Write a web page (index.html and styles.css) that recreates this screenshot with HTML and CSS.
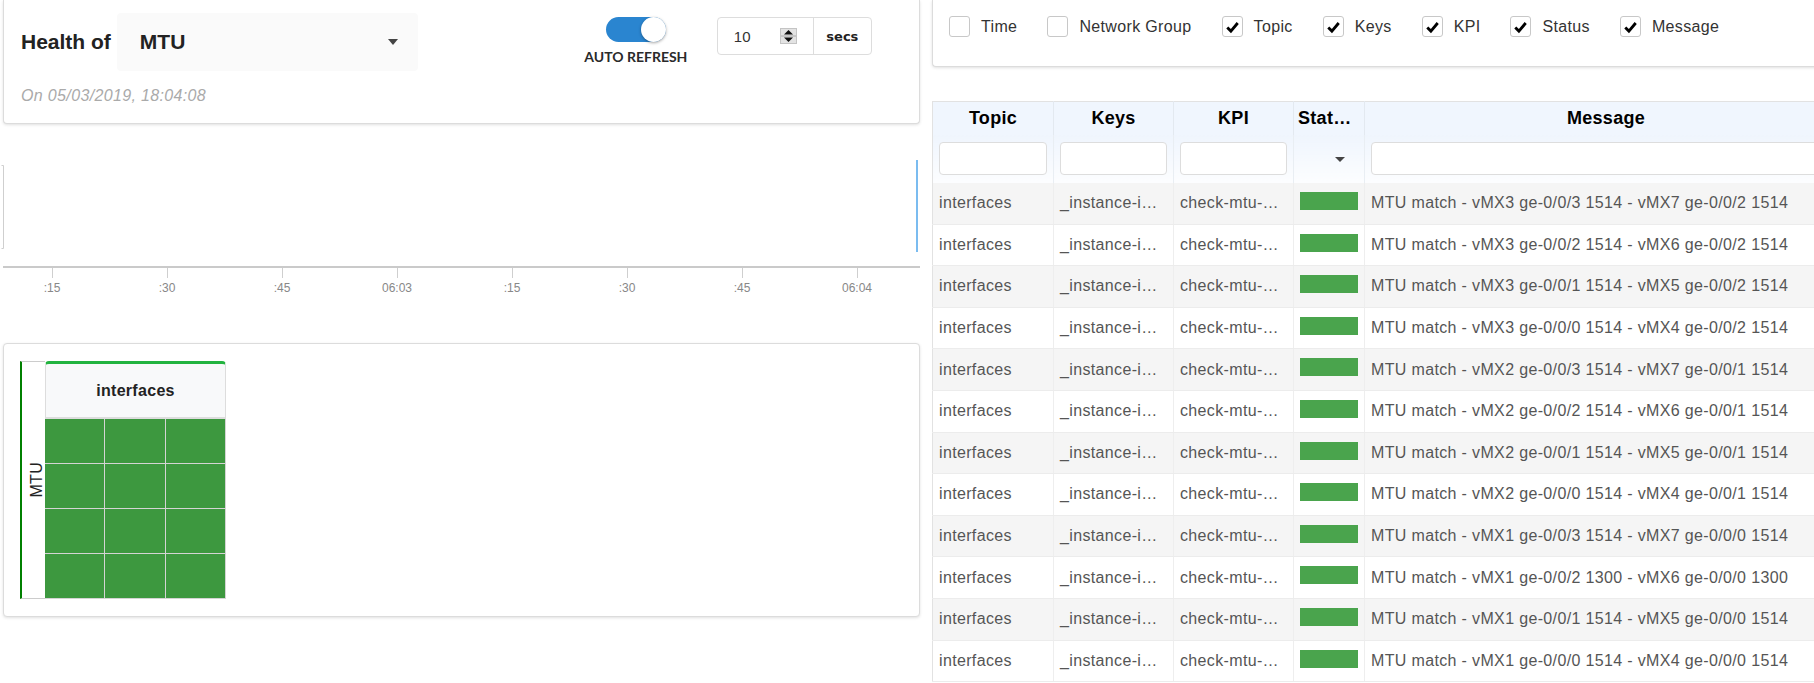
FILE: index.html
```html
<!DOCTYPE html>
<html lang="en">
<head>
<meta charset="utf-8">
<title>Health of MTU</title>
<link rel="stylesheet" href="styles.css">
</head>
<body>
<div class="page">
  <div class="left">
    <div class="card health">
      <div class="health-top">
        <div class="title-row">
          <span class="title">Health of</span>
          <div class="select"><span>MTU</span><span class="caret"></span></div>
        </div>
        <div class="refresh">
          <div class="toggle-box">
            <div class="toggle"><span class="knob"></span></div>
            <div class="toggle-label">AUTO REFRESH</div>
          </div>
          <div class="interval">
            <div class="num"><span>10</span>
              <svg class="spin" width="17" height="16" viewBox="0 0 17 16">
                <rect x="0.5" y="0.5" width="16" height="15" fill="#e3e3e3" stroke="#c4c4c4"/>
                <line x1="1" y1="8" x2="16" y2="8" stroke="#aaa"/>
                <path d="M4 6.5 L8.5 2 L13 6.5 Z" fill="#111"/>
                <path d="M4 9.5 L8.5 14 L13 9.5 Z" fill="#111"/>
              </svg>
            </div>
            <div class="unit">secs</div>
          </div>
        </div>
      </div>
      <div class="date">On 05/03/2019, 18:04:08</div>
    </div>

    <svg class="chart" width="917" height="219" viewBox="0 0 917 219">
      <path d="M-1.5 41.5 H0.5 V124.5 H-1.5" fill="none" stroke="#cfcfcf" stroke-width="1"/>
      <line x1="0" y1="143" x2="917" y2="143" stroke="#cacaca" stroke-width="2"/>
      <g stroke="#cfcfcf" stroke-width="1">
        <line x1="49.5" y1="144" x2="49.5" y2="154"/>
        <line x1="164.5" y1="144" x2="164.5" y2="154"/>
        <line x1="279.5" y1="144" x2="279.5" y2="154"/>
        <line x1="394.5" y1="144" x2="394.5" y2="154"/>
        <line x1="509.5" y1="144" x2="509.5" y2="154"/>
        <line x1="624.5" y1="144" x2="624.5" y2="154"/>
        <line x1="739.5" y1="144" x2="739.5" y2="154"/>
        <line x1="854.5" y1="144" x2="854.5" y2="154"/>
      </g>
      <g class="tick-label" text-anchor="middle">
        <text x="49" y="168">:15</text>
        <text x="164" y="168">:30</text>
        <text x="279" y="168">:45</text>
        <text x="394" y="168">06:03</text>
        <text x="509" y="168">:15</text>
        <text x="624" y="168">:30</text>
        <text x="739" y="168">:45</text>
        <text x="854" y="168">06:04</text>
      </g>
      <line x1="914" y1="36" x2="914" y2="128" stroke="#7bbcf0" stroke-width="2"/>
    </svg>

    <div class="card full heat">
      <div class="heatmap">
        <div class="ylabel"><span>MTU</span></div>
        <div class="hblock">
          <div class="hhead">interfaces</div>
          <div class="hgrid">
            <div class="hc"></div><div class="hc"></div><div class="hc"></div>
            <div class="hc"></div><div class="hc"></div><div class="hc"></div>
            <div class="hc"></div><div class="hc"></div><div class="hc"></div>
            <div class="hc"></div><div class="hc"></div><div class="hc"></div>
          </div>
        </div>
      </div>
    </div>
  </div>

  <div class="right">
    <div class="card cols">
      <label class="cb"><span class="box"></span>Time</label>
      <label class="cb"><span class="box"></span>Network Group</label>
      <label class="cb"><span class="box on"><svg width="20" height="20" viewBox="0 0 20 20"><path d="M4.5 10.5 L8.3 14.3 L15.5 5.8" fill="none" stroke="#000" stroke-width="3"/></svg></span>Topic</label>
      <label class="cb"><span class="box on"><svg width="20" height="20" viewBox="0 0 20 20"><path d="M4.5 10.5 L8.3 14.3 L15.5 5.8" fill="none" stroke="#000" stroke-width="3"/></svg></span>Keys</label>
      <label class="cb"><span class="box on"><svg width="20" height="20" viewBox="0 0 20 20"><path d="M4.5 10.5 L8.3 14.3 L15.5 5.8" fill="none" stroke="#000" stroke-width="3"/></svg></span>KPI</label>
      <label class="cb"><span class="box on"><svg width="20" height="20" viewBox="0 0 20 20"><path d="M4.5 10.5 L8.3 14.3 L15.5 5.8" fill="none" stroke="#000" stroke-width="3"/></svg></span>Status</label>
      <label class="cb"><span class="box on"><svg width="20" height="20" viewBox="0 0 20 20"><path d="M4.5 10.5 L8.3 14.3 L15.5 5.8" fill="none" stroke="#000" stroke-width="3"/></svg></span>Message</label>
    </div>

    <table class="grid-table">
      <colgroup>
        <col class="c-topic"><col class="c-keys"><col class="c-kpi"><col class="c-status"><col class="c-msg">
      </colgroup>
      <thead>
        <tr class="titles"><th>Topic</th><th>Keys</th><th>KPI</th><th class="th-status">Stat…</th><th>Message</th></tr>
        <tr class="filters">
          <td><input type="text"></td>
          <td><input type="text"></td>
          <td><input type="text"></td>
          <td class="f-status"><span class="caret small"></span></td>
          <td><input type="text"></td>
        </tr>
      </thead>
      <tbody>
        <tr><td>interfaces</td><td>_instance-i…</td><td>check-mtu-…</td><td class="st"><div class="bar"></div></td><td class="msg">MTU match - vMX3 ge-0/0/3 1514 - vMX7 ge-0/0/2 1514</td></tr>
        <tr><td>interfaces</td><td>_instance-i…</td><td>check-mtu-…</td><td class="st"><div class="bar"></div></td><td class="msg">MTU match - vMX3 ge-0/0/2 1514 - vMX6 ge-0/0/2 1514</td></tr>
        <tr><td>interfaces</td><td>_instance-i…</td><td>check-mtu-…</td><td class="st"><div class="bar"></div></td><td class="msg">MTU match - vMX3 ge-0/0/1 1514 - vMX5 ge-0/0/2 1514</td></tr>
        <tr><td>interfaces</td><td>_instance-i…</td><td>check-mtu-…</td><td class="st"><div class="bar"></div></td><td class="msg">MTU match - vMX3 ge-0/0/0 1514 - vMX4 ge-0/0/2 1514</td></tr>
        <tr><td>interfaces</td><td>_instance-i…</td><td>check-mtu-…</td><td class="st"><div class="bar"></div></td><td class="msg">MTU match - vMX2 ge-0/0/3 1514 - vMX7 ge-0/0/1 1514</td></tr>
        <tr><td>interfaces</td><td>_instance-i…</td><td>check-mtu-…</td><td class="st"><div class="bar"></div></td><td class="msg">MTU match - vMX2 ge-0/0/2 1514 - vMX6 ge-0/0/1 1514</td></tr>
        <tr><td>interfaces</td><td>_instance-i…</td><td>check-mtu-…</td><td class="st"><div class="bar"></div></td><td class="msg">MTU match - vMX2 ge-0/0/1 1514 - vMX5 ge-0/0/1 1514</td></tr>
        <tr><td>interfaces</td><td>_instance-i…</td><td>check-mtu-…</td><td class="st"><div class="bar"></div></td><td class="msg">MTU match - vMX2 ge-0/0/0 1514 - vMX4 ge-0/0/1 1514</td></tr>
        <tr><td>interfaces</td><td>_instance-i…</td><td>check-mtu-…</td><td class="st"><div class="bar"></div></td><td class="msg">MTU match - vMX1 ge-0/0/3 1514 - vMX7 ge-0/0/0 1514</td></tr>
        <tr><td>interfaces</td><td>_instance-i…</td><td>check-mtu-…</td><td class="st"><div class="bar"></div></td><td class="msg">MTU match - vMX1 ge-0/0/2 1300 - vMX6 ge-0/0/0 1300</td></tr>
        <tr><td>interfaces</td><td>_instance-i…</td><td>check-mtu-…</td><td class="st"><div class="bar"></div></td><td class="msg">MTU match - vMX1 ge-0/0/1 1514 - vMX5 ge-0/0/0 1514</td></tr>
        <tr><td>interfaces</td><td>_instance-i…</td><td>check-mtu-…</td><td class="st"><div class="bar"></div></td><td class="msg">MTU match - vMX1 ge-0/0/0 1514 - vMX4 ge-0/0/0 1514</td></tr>
      </tbody>
    </table>
  </div>
</div>
</body>
</html>
```

FILE: styles.css
```css
* { box-sizing: border-box; }
html, body { margin: 0; padding: 0; }
body {
  font-family: "Liberation Sans", Arial, sans-serif;
  color: #333;
  background: #fff;
  width: 1814px;
  height: 683px;
  overflow: hidden;
}
.page {
  display: flex;
  align-items: flex-start;
  gap: 12px;
  padding-left: 3px;
}
.left { width: 917px; flex: none; }
.right { width: 915px; flex: none; }

.card {
  background: #fff;
  border: 1px solid #dcdcdc;
  border-top: 0;
  border-radius: 0 0 4px 4px;
  box-shadow: 0 1px 3px rgba(0, 0, 0, 0.12);
}
.card.full {
  border-top: 1px solid #dcdcdc;
  border-radius: 4px;
}

/* health card */
.health { padding: 13px 0 17px 17px; }
.health-top { display: flex; align-items: flex-start; }
.title-row { display: flex; align-items: center; gap: 6px; }
.title { font-size: 21px; font-weight: bold; color: #222; }
.select {
  width: 301px;
  height: 58px;
  background: #fafafa;
  border-radius: 4px;
  display: flex;
  align-items: center;
  justify-content: space-between;
  padding: 0 20px 0 23px;
  font-size: 21px;
  font-weight: bold;
  color: #222;
}
.caret {
  width: 0;
  height: 0;
  border-left: 5px solid transparent;
  border-right: 5px solid transparent;
  border-top: 6px solid #444;
}
.caret.small {
  border-left-width: 5px;
  border-right-width: 5px;
  border-top-width: 5px;
}
.refresh {
  display: flex;
  align-items: flex-start;
  gap: 29px;
  margin-left: 166px;
  margin-top: 4px;
}
.toggle-box {
  width: 104px;
  display: flex;
  flex-direction: column;
  align-items: center;
}
.toggle {
  width: 60px;
  height: 25px;
  border-radius: 13px;
  background: #2a85d0;
  display: flex;
  justify-content: flex-end;
}
.knob {
  width: 25px;
  height: 25px;
  border-radius: 50%;
  background: #fff;
  box-shadow: 0 1px 3px rgba(0, 0, 0, 0.35);
}
.toggle-label {
  margin-top: 6px;
  font-family: Lato, "Liberation Sans", sans-serif;
  font-weight: bold;
  font-size: 14px;
  line-height: 17px;
  color: #2a2a2a;
  white-space: nowrap;
}
.interval {
  display: flex;
  height: 38px;
  border: 1px solid #ddd;
  border-radius: 4px;
}
.num {
  width: 96px;
  display: flex;
  align-items: center;
  padding-left: 16px;
  border-right: 1px solid #ddd;
  font-size: 15px;
  color: #333;
}
.spin { margin-left: 29px; display: block; }
.unit {
  width: 57px;
  display: flex;
  align-items: center;
  justify-content: center;
  font-family: "DejaVu Sans", Verdana, sans-serif;
  font-weight: bold;
  font-size: 13px;
  color: #222;
}
.date {
  margin-top: 15px;
  font-size: 16px;
  line-height: 20px;
  font-style: italic;
  color: #aaa;
  letter-spacing: 0.35px;
}

/* chart */
.chart { display: block; overflow: visible; }
.tick-label text {
  font-family: "Liberation Sans", Arial, sans-serif;
  font-size: 12px;
  fill: #888;
}

/* heatmap */
.heat { padding: 17px 16px; }
.heatmap { display: flex; }
.ylabel {
  width: 25px;
  border-left: 2px solid #008000;
  border-top: 1px solid #ccc;
  border-bottom: 1px solid #ccc;
  display: flex;
  align-items: center;
  justify-content: center;
  padding-left: 6px;
}
.ylabel span {
  writing-mode: vertical-rl;
  transform: rotate(180deg);
  font-size: 16px;
  color: #222;
  letter-spacing: 0.3px;
}
.hblock { width: 181px; }
.hhead {
  height: 58px;
  border-top: 3px solid #22b33f;
  border-left: 1px solid #ddd;
  border-right: 1px solid #ddd;
  border-bottom: 2px solid #ddd;
  border-radius: 4px 4px 0 0;
  background: #f8f9fa;
  display: flex;
  align-items: center;
  justify-content: center;
  font-size: 16px;
  font-weight: bold;
  color: #222;
  letter-spacing: 0.3px;
}
.hgrid {
  display: grid;
  grid-template-columns: repeat(3, 1fr);
  grid-auto-rows: 44px;
  gap: 1px;
  background: #d4d4d4;
  padding: 0 1px 1px 0;
}
.hc { background: #3d983f; }

/* columns card */
.cols {
  height: 67px;
  display: flex;
  align-items: flex-start;
  padding: 16px 0 0 16px;
  border-right: 0;
  border-radius: 0 0 0 4px;
}
.cb {
  display: flex;
  align-items: center;
  gap: 11px;
  margin-right: 30px;
  font-size: 16px;
  line-height: 21px;
  color: #333;
  letter-spacing: 0.35px;
  white-space: nowrap;
}
.box {
  width: 21px;
  height: 21px;
  border: 1px solid #c8c8c8;
  border-radius: 3px;
  background: #fff;
  display: flex;
  align-items: center;
  justify-content: center;
}
.box svg { display: block; }

/* table */
.grid-table {
  width: 915px;
  margin-top: 34px;
  table-layout: fixed;
  border-collapse: collapse;
  border-top: 1px solid #e2e2e2;
  border-left: 1px solid #e2e2e2;
}
.c-topic { width: 121px; }
.c-keys { width: 120px; }
.c-kpi { width: 120px; }
.c-status { width: 71px; }
.c-msg { width: 483px; }
.titles th {
  height: 33px;
  padding: 0 4px;
  background: #f0f6fe;
  font-size: 18px;
  font-weight: bold;
  color: #000;
  text-align: center;
  white-space: nowrap;
  overflow: hidden;
  border-right: 1px solid #e3e9f0;
  letter-spacing: 0.3px;
}
.titles th.th-status { text-align: left; padding-left: 4px; }
.filters td {
  height: 48px;
  padding: 0 6px;
  background: linear-gradient(#eff5fd, #fcfdff);
  border-right: 1px solid #e9eef3;
}
.filters input {
  display: block;
  width: 100%;
  height: 33px;
  border: 1px solid #ddd;
  border-radius: 4px;
  background: #fff;
}
.f-status { text-align: right; }
.f-status .caret { display: inline-block; margin-right: 13px; vertical-align: middle; }
tbody td {
  height: 41.6px;
  padding: 0 6px;
  font-size: 16px;
  color: #555;
  letter-spacing: 0.35px;
  white-space: nowrap;
  overflow: hidden;
  border-right: 1px solid #eee;
  border-bottom: 1px solid #ececec;
  background: #fff;
}
tbody tr:nth-child(odd) td { background: #f5f5f5; }
tbody td.st { padding: 9px 6px 0; vertical-align: top; }
.bar { height: 18px; background: #4aa44d; }
```
